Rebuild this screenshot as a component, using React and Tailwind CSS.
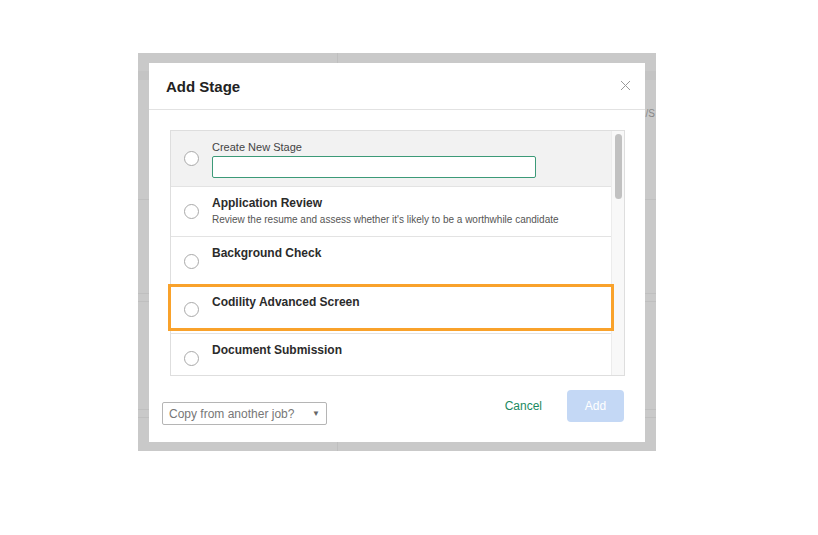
import React from "react";

function Radio() {
  return (
    <div className="w-[15px] h-[15px] rounded-full border border-[#a9a9a9] bg-white shrink-0" />
  );
}

function Row({ title, desc, h, last }) {
  return (
    <div
      className={`flex items-center pl-[13px] bg-white ${last ? "" : "border-b border-[#e3e3e3]"}`}
      style={{ height: h }}
    >
      <Radio />
      <div className="self-start pt-[8px] pl-[13px]">
        <div className="text-[12px] leading-[16px] font-bold text-[#2b2b2b]">{title}</div>
        {desc && (
          <div className="text-[10px] leading-[15px] text-[#555] mt-[1px]">{desc}</div>
        )}
      </div>
    </div>
  );
}

export default function App() {
  return (
    <div
      className="w-[818px] h-[535px] bg-white overflow-hidden relative"
      style={{ fontFamily: '"Liberation Sans", Arial, sans-serif' }}
    >
      <div className="absolute left-[138px] top-[53px] w-[518px] h-[398px] bg-[#c9c9c9] overflow-hidden">
        {/* faint background page lines */}
        <div className="absolute left-0 right-0 top-[146px] h-px bg-[#bfbfbf]" />
        <div className="absolute left-0 right-0 top-[240px] h-px bg-[#bfbfbf]" />
        <div className="absolute left-0 right-0 top-[248px] h-px bg-[#bfbfbf]" />
        <div className="absolute left-0 right-0 top-[356px] h-px bg-[#bfbfbf]" />
        <div className="absolute left-0 right-0 top-[364px] h-px bg-[#bfbfbf]" />
        <div className="absolute left-0 right-0 top-[18px] h-[9px] bg-[#c4c4c4]" />
        <div className="absolute left-[199px] top-0 bottom-0 w-px bg-[#bfbfbf]" />
        <div className="absolute right-[1px] top-[53px] text-[10px] text-[#888]">/S</div>

        {/* modal */}
        <div className="absolute left-[11px] top-[10px] w-[496px] h-[379px] bg-white flex flex-col">
          <div className="h-[47px] flex items-center justify-between pl-[17px] pr-[14px] pt-[2px] border-b border-[#e2e2e2]">
            <div className="text-[15px] font-bold text-[#222]">Add Stage</div>
            <svg width="11" height="11" viewBox="0 0 11 11" className="mt-[-4px]">
              <path d="M1 1L10 10M10 1L1 10" stroke="#9a9a9a" strokeWidth="1" />
            </svg>
          </div>

          <div className="mt-[20px] ml-[21px] mr-[20px] h-[246px] border border-[#dedede] relative flex">
            <div className="flex-1 overflow-hidden">
              <div className="h-[56px] bg-[#f2f2f2] border-b border-[#e3e3e3] flex items-center pl-[13px]">
                <Radio />
                <div className="self-start pt-[9px] pl-[13px]">
                  <div className="text-[11px] leading-[14px] text-[#444]">Create New Stage</div>
                  <div className="mt-[2px] w-[324px] h-[22px] bg-white border border-[#3c9a78] rounded-[2px]" />
                </div>
              </div>
              <Row
                h={50}
                title="Application Review"
                desc="Review the resume and assess whether it's likely to be a worthwhile candidate"
              />
              <Row h={49} title="Background Check" />
              <Row h={48} title="Codility Advanced Screen" />
              <Row h={49} title="Document Submission" last />
            </div>
            <div className="w-[13px] bg-[#f8f8f8] border-l border-[#ececec] flex justify-center pt-[3px]">
              <div className="w-[7px] h-[65px] rounded-full bg-[#c1c1c1]" />
            </div>
            {/* highlight annotation */}
            <div className="absolute left-[-3px] top-[153px] w-[446px] h-[47px] border-[3px] border-[#f9a22b]" />
          </div>

          <div className="flex items-start justify-between pl-[13px] pr-[21px] pt-[14px]">
            <div className="mt-[12px] w-[165px] h-[23px] border border-[#b5b5b5] rounded-[2px] flex items-center justify-between pl-[6px] pr-[6px]">
              <span className="text-[12px] text-[#777]">Copy from another job?</span>
              <span className="text-[8px] text-[#666]">▼</span>
            </div>
            <div className="flex items-center gap-[25px]">
              <span className="text-[12px] text-[#1b8a5f]">Cancel</span>
              <div className="w-[57px] h-[32px] rounded-[4px] bg-[#c4d8f5] flex items-center justify-center text-[12px] text-white">
                Add
              </div>
            </div>
          </div>
        </div>
      </div>
    </div>
  );
}
